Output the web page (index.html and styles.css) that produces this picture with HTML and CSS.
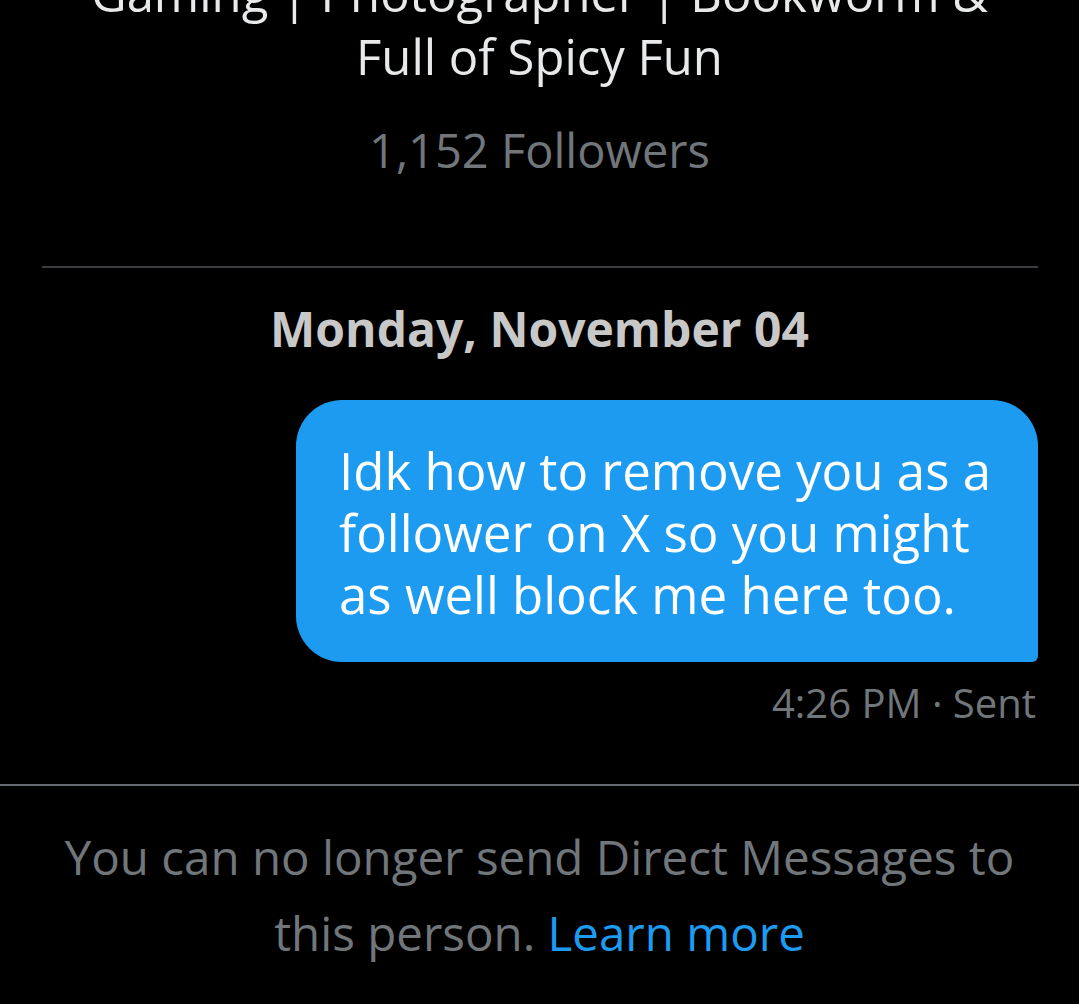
FILE: index.html
```html
<!DOCTYPE html>
<html lang="en">
<head>
  <meta charset="UTF-8">
  <title>Direct Messages</title>
  <link rel="stylesheet" href="styles.css">
</head>
<body>
  <div class="profile">
    <p class="bio">Gaming | Photographer | Bookworm &amp;<br>Full of Spicy Fun</p>
    <p class="followers">1,152 Followers</p>
  </div>

  <hr class="divider">

  <div class="day">Monday, November 04</div>

  <div class="message-row">
    <div class="bubble">Idk how to remove you as a follower on X so you might as well block me here too.</div>
  </div>
  <div class="meta">4:26 PM · Sent</div>

  <div class="notice">
    <p>You can no longer send Direct Messages to this person. <a href="#">Learn more</a></p>
  </div>
</body>
</html>
```
FILE: styles.css
```css
body {
  margin: 0;
  background-color: #000;
  color: #e7e9ea;
  font-family: "Open Sans", Roboto, sans-serif;
  overflow: hidden;
}

.profile {
  text-align: center;
}

.bio {
  font-size: 49px;
  line-height: 63px;
  margin: -38px 0 0;
}

.followers {
  font-size: 47px;
  line-height: 60px;
  color: #71767b;
  margin: 32px 0 0;
}

.divider {
  border: none;
  border-top: 2px solid #3a3c3f;
  margin: 86px 41px 0 42px;
}

.day {
  text-align: center;
  font-size: 48px;
  line-height: 60px;
  font-weight: bold;
  color: #c8c8c8;
  margin-top: 31px;
}

.message-row {
  display: flex;
  justify-content: flex-end;
  padding: 0 41px;
  margin-top: 41px;
}

.bubble {
  background-color: #1d9bf0;
  color: #fff;
  font-size: 51px;
  line-height: 62px;
  width: 657px;
  padding: 39px 42px 37px 43px;
  border-radius: 46px 46px 6px 46px;
}

.meta {
  text-align: right;
  padding-right: 43px;
  font-size: 40px;
  line-height: 50px;
  color: #71767b;
  margin-top: 16px;
}

.notice {
  border-top: 2px solid #676b70;
  margin-top: 56px;
  text-align: center;
  color: #71767b;
  font-size: 47.5px;
  line-height: 76px;
  padding: 33px 40px;
}

.notice p {
  margin: 0;
}

.notice a {
  color: #1d9bf0;
  text-decoration: none;
}
```
